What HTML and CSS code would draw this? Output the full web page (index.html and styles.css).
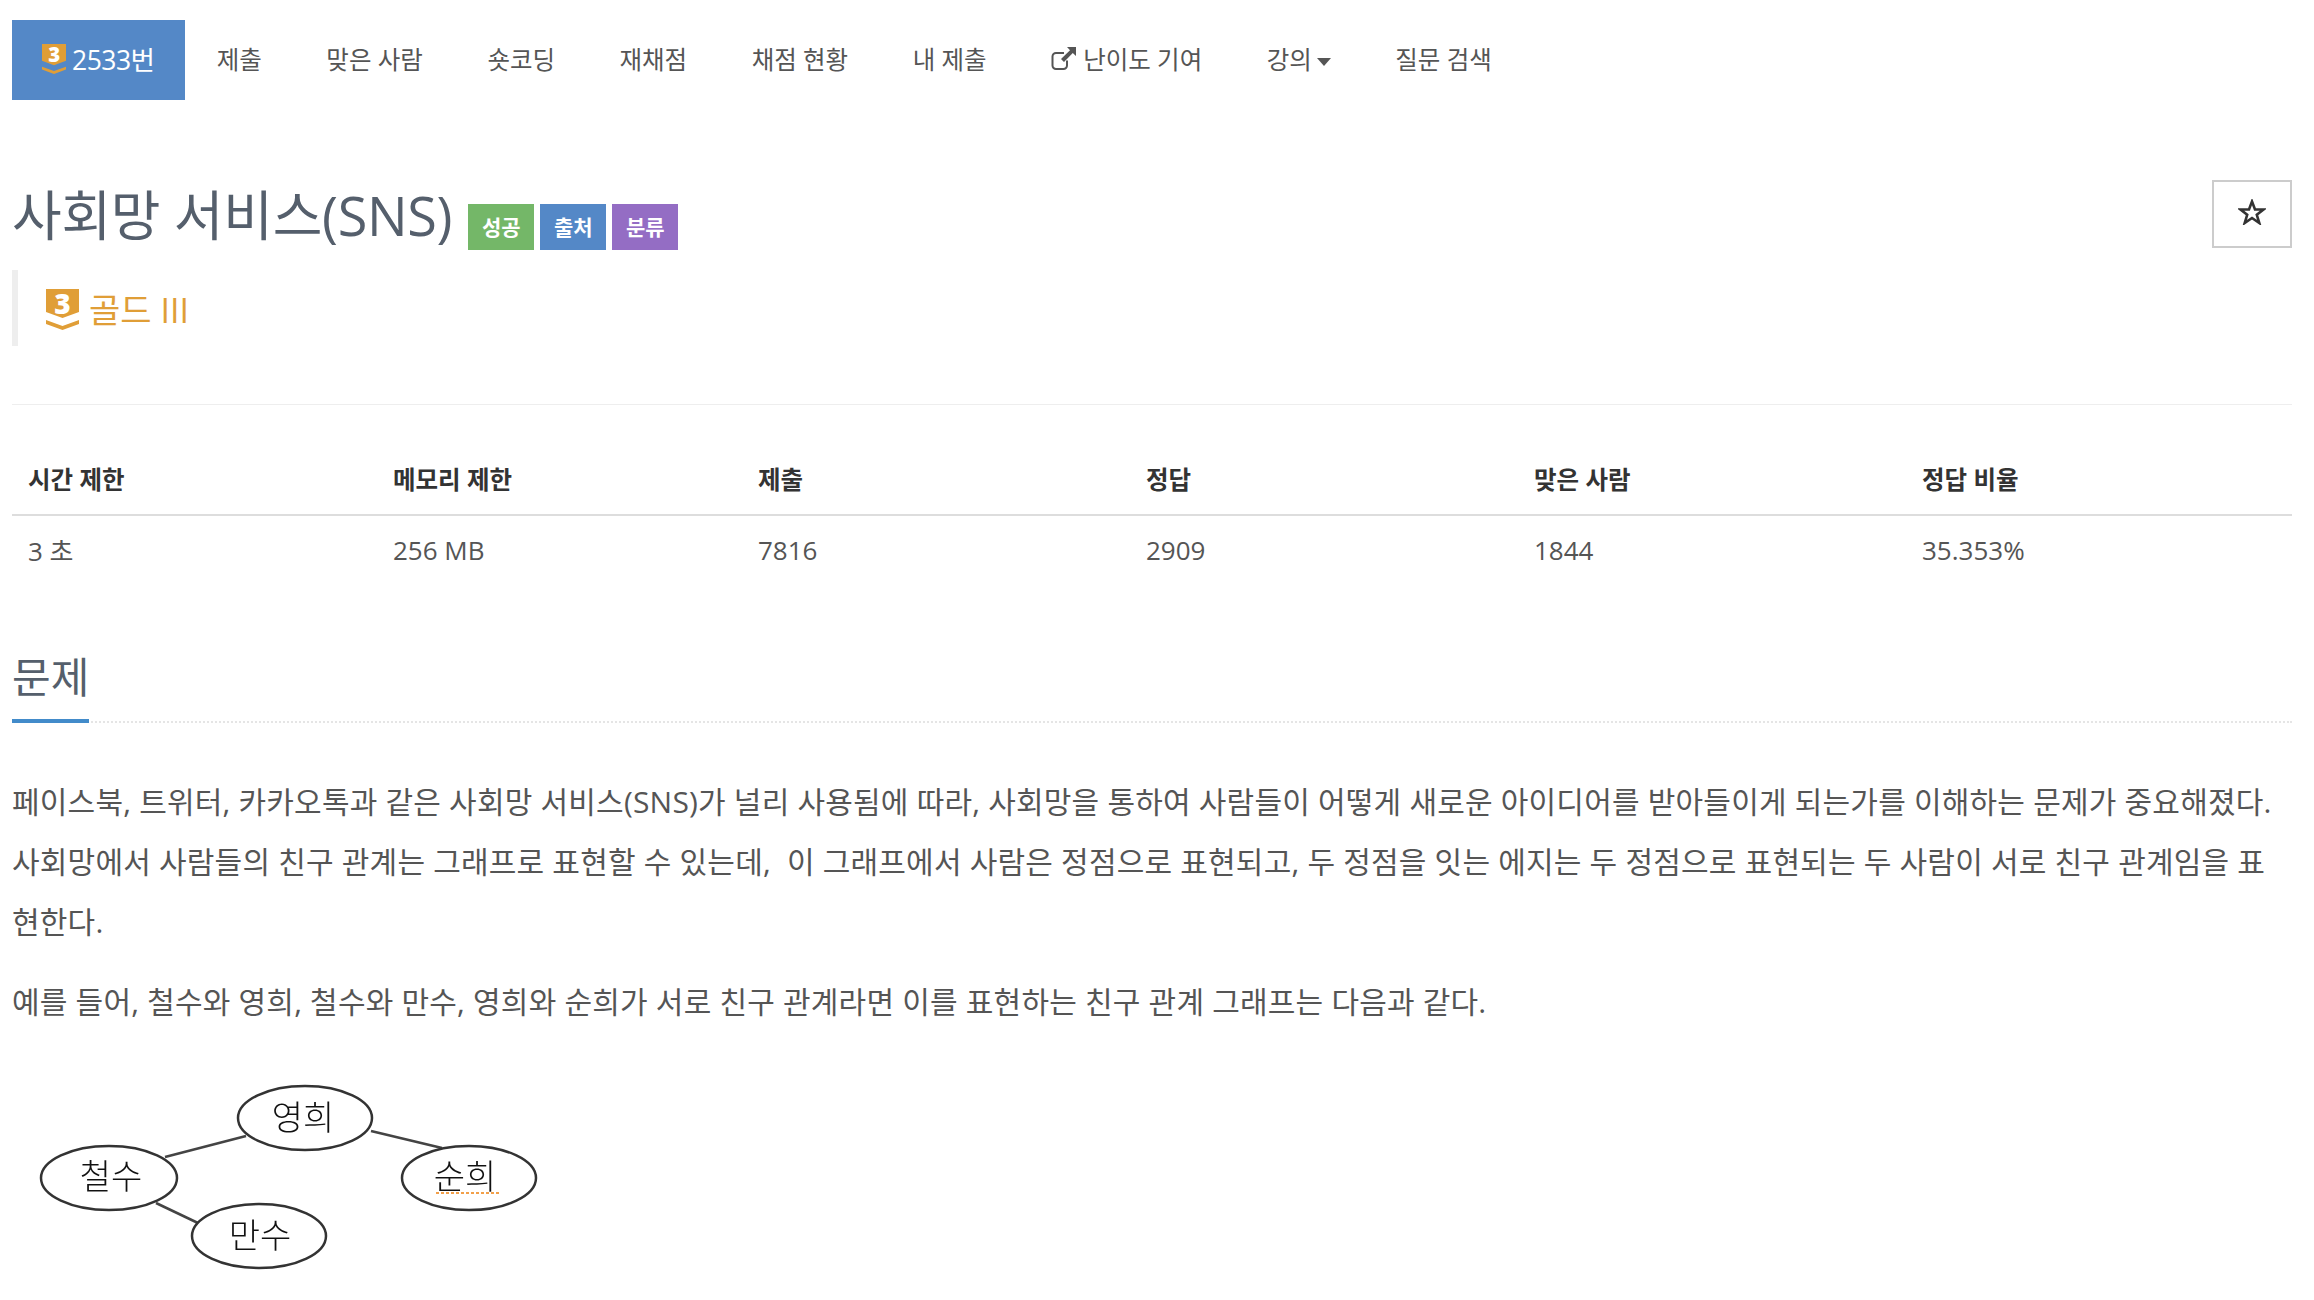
FILE: index.html
```html
<!DOCTYPE html>
<html lang="ko">
<head>
    <meta charset="UTF-8">
    <meta name="viewport" content="width=device-width, initial-scale=1.0">
    <title>2533번: 사회망 서비스(SNS)</title>
    <link rel="stylesheet" href="styles.css">
</head>
<body>
    <div class="container">
        <ul class="nav">
            <li class="active">
                <a href="#">
                    <svg class="tier tier-small" viewBox="0 0 33 41"><path d="M0 0H33V23L16.500 29L0 23Z"/><path d="M0 31L16.500 37L33 31V35L16.500 41L0 35Z"/><text x="16.500" y="24.500" class="tier-num">3</text></svg>
                    2533번
                </a>
            </li>
            <li><a href="#">제출</a></li>
            <li><a href="#">맞은 사람</a></li>
            <li><a href="#">숏코딩</a></li>
            <li><a href="#">재채점</a></li>
            <li><a href="#">채점 현황</a></li>
            <li><a href="#">내 제출</a></li>
            <li>
                <a href="#">
                    <svg class="ext-link" viewBox="0 0 26 24"><path d="M16 13.500V18.500A3.500 3.500 0 0 1 12.500 22H5A3.500 3.500 0 0 1 1.500 18.500V9.500A3.500 3.500 0 0 1 5 6H13" fill="none" stroke="#555" stroke-width="2"/><path d="M16 0H25V9L21.800 6L13 15L10 12L19 3.200Z" fill="#555"/></svg>
                    난이도 기여
                </a>
            </li>
            <li><a href="#">강의<span class="caret"></span></a></li>
            <li><a href="#">질문 검색</a></li>
        </ul>

        <div class="title-row">
            <h1>사회망 서비스(SNS)</h1>
            <span class="label label-green">성공</span>
            <span class="label label-blue">출처</span>
            <span class="label label-purple">분류</span>
            <button class="star-btn">
                <svg viewBox="0 0 28 26"><path d="M14 2.500L17 10.500H25.500L18.800 15.800L21.300 24L14 19L6.700 24L9.200 15.800L2.500 10.500H11Z" fill="none" stroke="#333" stroke-width="2.600"/></svg>
            </button>
        </div>

        <blockquote class="rating">
            <svg class="tier tier-big" viewBox="0 0 33 41"><path d="M0 0H33V23L16.500 29L0 23Z"/><path d="M0 31L16.500 37L33 31V35L16.500 41L0 35Z"/><text x="16.500" y="24.500" class="tier-num">3</text></svg>
            <span>골드 III</span>
        </blockquote>

        <hr class="divider">

        <table class="info">
            <thead>
                <tr>
                    <th class="col-a">시간 제한</th>
                    <th class="col-a">메모리 제한</th>
                    <th class="col-b">제출</th>
                    <th class="col-b">정답</th>
                    <th class="col-b">맞은 사람</th>
                    <th>정답 비율</th>
                </tr>
            </thead>
            <tbody>
                <tr>
                    <td>3 초</td>
                    <td>256 MB</td>
                    <td>7816</td>
                    <td>2909</td>
                    <td>1844</td>
                    <td>35.353%</td>
                </tr>
            </tbody>
        </table>

        <div class="headline">
            <h2>문제</h2>
        </div>

        <div class="problem">
            <p>페이스북, 트위터, 카카오톡과 같은 사회망 서비스(SNS)가 널리 사용됨에 따라, 사회망을 통하여 사람들이 어떻게 새로운 아이디어를 받아들이게 되는가를 이해하는 문제가 중요해졌다. 사회망에서 사람들의 친구 관계는 그래프로 표현할 수 있는데,&nbsp; 이 그래프에서 사람은 정점으로 표현되고, 두 정점을 잇는 에지는 두 정점으로 표현되는 두 사람이 서로 친구 관계임을 표현한다.</p>
            <p>예를 들어, 철수와 영희, 철수와 만수, 영희와 순희가 서로 친구 관계라면 이를 표현하는 친구 관계 그래프는 다음과 같다.</p>
            <svg class="graph" viewBox="12 0 540 220">
                <g class="edges">
                    <line x1="246" y1="75" x2="165" y2="96"/>
                    <line x1="371" y1="70" x2="442" y2="87"/>
                    <line x1="156" y1="142" x2="198" y2="162"/>
                </g>
                <g class="nodes">
                    <ellipse cx="305" cy="57" rx="67" ry="32"/>
                    <ellipse cx="109" cy="117" rx="68" ry="32"/>
                    <ellipse cx="469" cy="117" rx="67" ry="32"/>
                    <ellipse cx="259" cy="175" rx="67" ry="32"/>
                </g>
                <g class="names">
                    <text x="303" y="69">영희</text>
                    <text x="111" y="128">철수</text>
                    <text x="465" y="128">순희</text>
                    <text x="260" y="187">만수</text>
                </g>
                <path class="squiggle" d="M436 132H500"/>
            </svg>
        </div>
    </div>
</body>
</html>
```

FILE: styles.css
```css
html, body {
    margin: 0;
    height: 1300px;
    overflow: hidden;
}
body {
    font-family: "Open Sans", "Noto Sans CJK KR", sans-serif;
    color: #555;
    background: #fff;
}
.container {
    padding: 20px 22px 0 12px;
}

/* top nav */
.nav {
    display: flex;
    margin: 0;
    padding: 0;
    list-style: none;
    height: 80px;
}
.nav a {
    display: flex;
    align-items: center;
    gap: 6px;
    box-sizing: border-box;
    height: 80px;
    padding: 0 32.250px 3px;
    font-size: 24.500px;
    color: #555;
    text-decoration: none;
}
.nav .active a {
    padding: 0 30px 3px 30px;
    font-size: 26.500px;
    letter-spacing: -0.500px;
    color: #fff;
    background: #5488c7;
}
.tier {
    overflow: visible;
}
.tier path {
    fill: #e09e37;
}
.tier-num {
    fill: #fff;
    font-family: "Open Sans", sans-serif;
    font-size: 28px;
    font-weight: 800;
    text-anchor: middle;
}
.tier-small {
    width: 24px;
    height: 30px;
}
.tier-big {
    width: 33px;
    height: 41px;
    margin-top: 3px;
}
.ext-link {
    width: 26px;
    height: 24px;
}
.caret {
    width: 0;
    height: 0;
    margin: 6px 0 0 -1px;
    border-top: 8px solid #555;
    border-left: 7px solid transparent;
    border-right: 7px solid transparent;
}

/* title */
.title-row {
    display: flex;
    align-items: flex-end;
    gap: 6px;
    box-sizing: border-box;
    height: 100px;
    margin-top: 70px;
    padding-bottom: 16px;
    position: relative;
}
h1 {
    margin: 0 10px 0 0;
    font-size: 54px;
    font-weight: 400;
    line-height: 78px;
    letter-spacing: -0.300px;
    color: #555f6c;
}
.label {
    width: 66px;
    height: 46px;
    margin-bottom: 4px;
    font-size: 21px;
    font-weight: 700;
    line-height: 46px;
    text-align: center;
    color: #fff;
}
.label-green {
    background: #74b768;
}
.label-blue {
    background: #5488c7;
}
.label-purple {
    background: #946dc4;
}
.star-btn {
    position: absolute;
    top: 10px;
    right: 0;
    width: 80px;
    height: 68px;
    padding: 0 0 4px;
    background: #fff;
    border: 2px solid #ccc;
}
.star-btn svg {
    display: block;
    width: 28px;
    height: 26px;
    margin: 0 auto;
}

/* tier line */
.rating {
    display: flex;
    align-items: center;
    gap: 10px;
    height: 76px;
    margin: 0;
    padding-left: 28px;
    border-left: 6px solid #eee;
    font-size: 34px;
    color: #e09e37;
}
.divider {
    height: 1px;
    margin: 58px 0 0;
    border: 0;
    background: #eee;
}

/* limits table */
.info {
    width: 100%;
    margin-top: 50px;
    border-collapse: collapse;
    table-layout: fixed;
    font-size: 26px;
}
.info th {
    box-sizing: border-box;
    height: 60px;
    padding: 0 16px 12px;
    font-size: 24.500px;
    font-weight: 700;
    text-align: left;
    color: #333;
    border-bottom: 2px solid #ddd;
}
.info td {
    height: 68px;
    padding: 0 16px;
    color: #555;
}
.col-a {
    width: 365px;
}
.col-b {
    width: 388px;
}

/* section heading */
.headline {
    margin-top: 33px;
    border-bottom: 2px dotted #e5e5e5;
}
h2 {
    display: inline-block;
    margin: 32px 0 -2px;
    padding-bottom: 14px;
    font-size: 42px;
    font-weight: 400;
    line-height: 56px;
    color: #555f6c;
    border-bottom: 4px solid #428bca;
}

/* problem text */
.problem {
    margin-top: 49px;
    font-size: 30px;
}
.problem p {
    margin: 0 0 20px;
    line-height: 60px;
    letter-spacing: 0.200px;
}
.graph {
    display: block;
    width: 540px;
    height: 220px;
    margin-top: 29px;
    filter: blur(0.500px);
}
.edges line {
    stroke: #444;
    stroke-width: 2.500;
}
.nodes ellipse {
    fill: #fff;
    stroke: #333;
    stroke-width: 2.500;
}
.names text {
    fill: #111;
    font-size: 34px;
    font-weight: 300;
    text-anchor: middle;
}
.squiggle {
    fill: none;
    stroke: #f2a04a;
    stroke-width: 2;
    stroke-dasharray: 3 2;
}
```
